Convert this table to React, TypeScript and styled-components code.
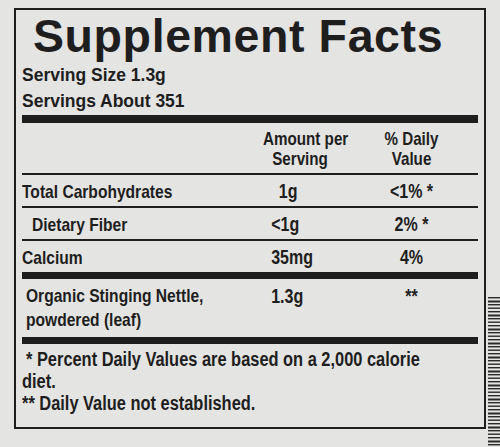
import React from "react";
import styled, { createGlobalStyle } from "styled-components";

const INK = "#1e1e1e";
const PAPER = "#e4e4e2";
const SANS = `"Liberation Sans", Arial, sans-serif`;
const SQUEEZE = 0.82;

const GlobalStyle = createGlobalStyle`
  html, body { margin: 0; padding: 0; background: ${PAPER}; }
  body { width: 500px; height: 447px; overflow: hidden; }
`;

const Page = styled.div`
  width: 500px;
  height: 447px;
  box-sizing: border-box;
  padding: 8px 0 0 14px;
  display: flex;
  align-items: flex-start;
  background: ${PAPER};
  color: ${INK};
`;

const Label = styled.section`
  flex: none;
  width: 472px;
  height: 421px;
  box-sizing: border-box;
  border: 2px solid ${INK};
  padding: 3px 6px 0;
  display: block;
`;

const Title = styled.h1`
  margin: 0 0 2px 11px;
  font: bold 46.5px/47px ${SANS};
  letter-spacing: 0.6px;
  white-space: nowrap;
`;

const ServingLine = styled.div`
  font: bold 18.5px/26px ${SANS};
  white-space: nowrap;
  transform: scaleX(0.945);
  transform-origin: left center;
`;

const HeavyBar = styled.div`
  height: 8px;
  margin-top: 1px;
  background: ${INK};
`;

const Grid = styled.div<{ $rule?: number; $pad?: string }>`
  display: grid;
  grid-template-columns: 233px 90px 133px;
  border-top: ${(p) => p.$rule ?? 0}px solid ${INK};
  padding: ${(p) => p.$pad ?? "0"};
`;

const HeadCell = styled.div<{ $col: number }>`
  grid-column: ${(p) => p.$col};
  font: bold 18.5px/20px ${SANS};
  text-align: center;
  white-space: nowrap;
  transform: scaleX(${SQUEEZE});
  transform-origin: center;
`;

const NameCell = styled.div<{ $indent?: number; $lh?: number }>`
  font: bold 19px/${(p) => p.$lh ?? 29}px ${SANS};
  padding-left: ${(p) => (p.$indent ?? 0) / SQUEEZE}px;
  white-space: nowrap;
  transform: scaleX(${SQUEEZE});
  transform-origin: left center;
`;

const AmountCell = styled.div<{ $lh?: number }>`
  font: bold 19.5px/${(p) => p.$lh ?? 29}px ${SANS};
  text-align: right;
  padding-right: 58px;
  white-space: nowrap;
  transform: scaleX(${SQUEEZE});
  transform-origin: right center;
`;

const DvCell = styled.div<{ $lh?: number }>`
  font: bold 19.5px/${(p) => p.$lh ?? 29}px ${SANS};
  text-align: center;
  white-space: nowrap;
  transform: scaleX(${SQUEEZE});
  transform-origin: center;
`;

const Footnotes = styled.div`
  border-top: 7px solid ${INK};
  padding-top: 4px;
`;

const Note = styled.p<{ $indent?: number; $width?: number }>`
  margin: 0;
  font: bold 20px/22px ${SANS};
  text-indent: ${(p) => (p.$indent ?? 0) / SQUEEZE}px;
  width: ${(p) => (p.$width ? `${p.$width}px` : "max-content")};
  transform: scaleX(${SQUEEZE});
  transform-origin: left center;
`;

const Barcode = styled.svg`
  display: block;
  margin: 289px 0 0 2px;
  flex: none;
`;

type Row = { name: string; amount: string; dv: string; indent?: number };

const rows: Row[] = [
  { name: "Total Carbohydrates", amount: "1g", dv: "<1% *" },
  { name: "Dietary Fiber", amount: "<1g", dv: "2% *", indent: 10 },
  { name: "Calcium", amount: "35mg", dv: "4%" },
];

const bars = Array.from({ length: 43 }, (_, i) => ({
  y: i * 3.5,
  h: i % 4 === 1 ? 2 : 1.4,
}));

export default function App() {
  return (
    <>
      <GlobalStyle />
      <Page>
        <Label>
          <Title>Supplement Facts</Title>
          <ServingLine>Serving Size 1.3g</ServingLine>
          <ServingLine>Servings About 351</ServingLine>
          <HeavyBar />
          <Grid $pad="6px 0 4px">
            <HeadCell $col={2}>
              Amount per
              <br />
              Serving
            </HeadCell>
            <HeadCell $col={3}>
              % Daily
              <br />
              Value
            </HeadCell>
          </Grid>
          {rows.map((r) => (
            <Grid key={r.name} $rule={2} $pad="2px 0 0">
              <NameCell $indent={r.indent}>{r.name}</NameCell>
              <AmountCell>{r.amount}</AmountCell>
              <DvCell>{r.dv}</DvCell>
            </Grid>
          ))}
          <Grid $rule={7} $pad="5px 0 5px">
            <NameCell $indent={4} $lh={24}>
              Organic Stinging Nettle,
              <br />
              powdered (leaf)
            </NameCell>
            <AmountCell $lh={24}>1.3g</AmountCell>
            <DvCell $lh={24}>**</DvCell>
          </Grid>
          <Footnotes>
            <Note $indent={4} $width={500}>
              * Percent Daily Values are based on a 2,000 calorie diet.
            </Note>
            <Note>** Daily Value not established.</Note>
          </Footnotes>
        </Label>
        <Barcode width="12" height="150" viewBox="0 0 12 150">
          {bars.map((b) => (
            <rect key={b.y} x="0" y={b.y} width="12" height={b.h} fill="#2a2a2a" />
          ))}
        </Barcode>
      </Page>
    </>
  );
}
